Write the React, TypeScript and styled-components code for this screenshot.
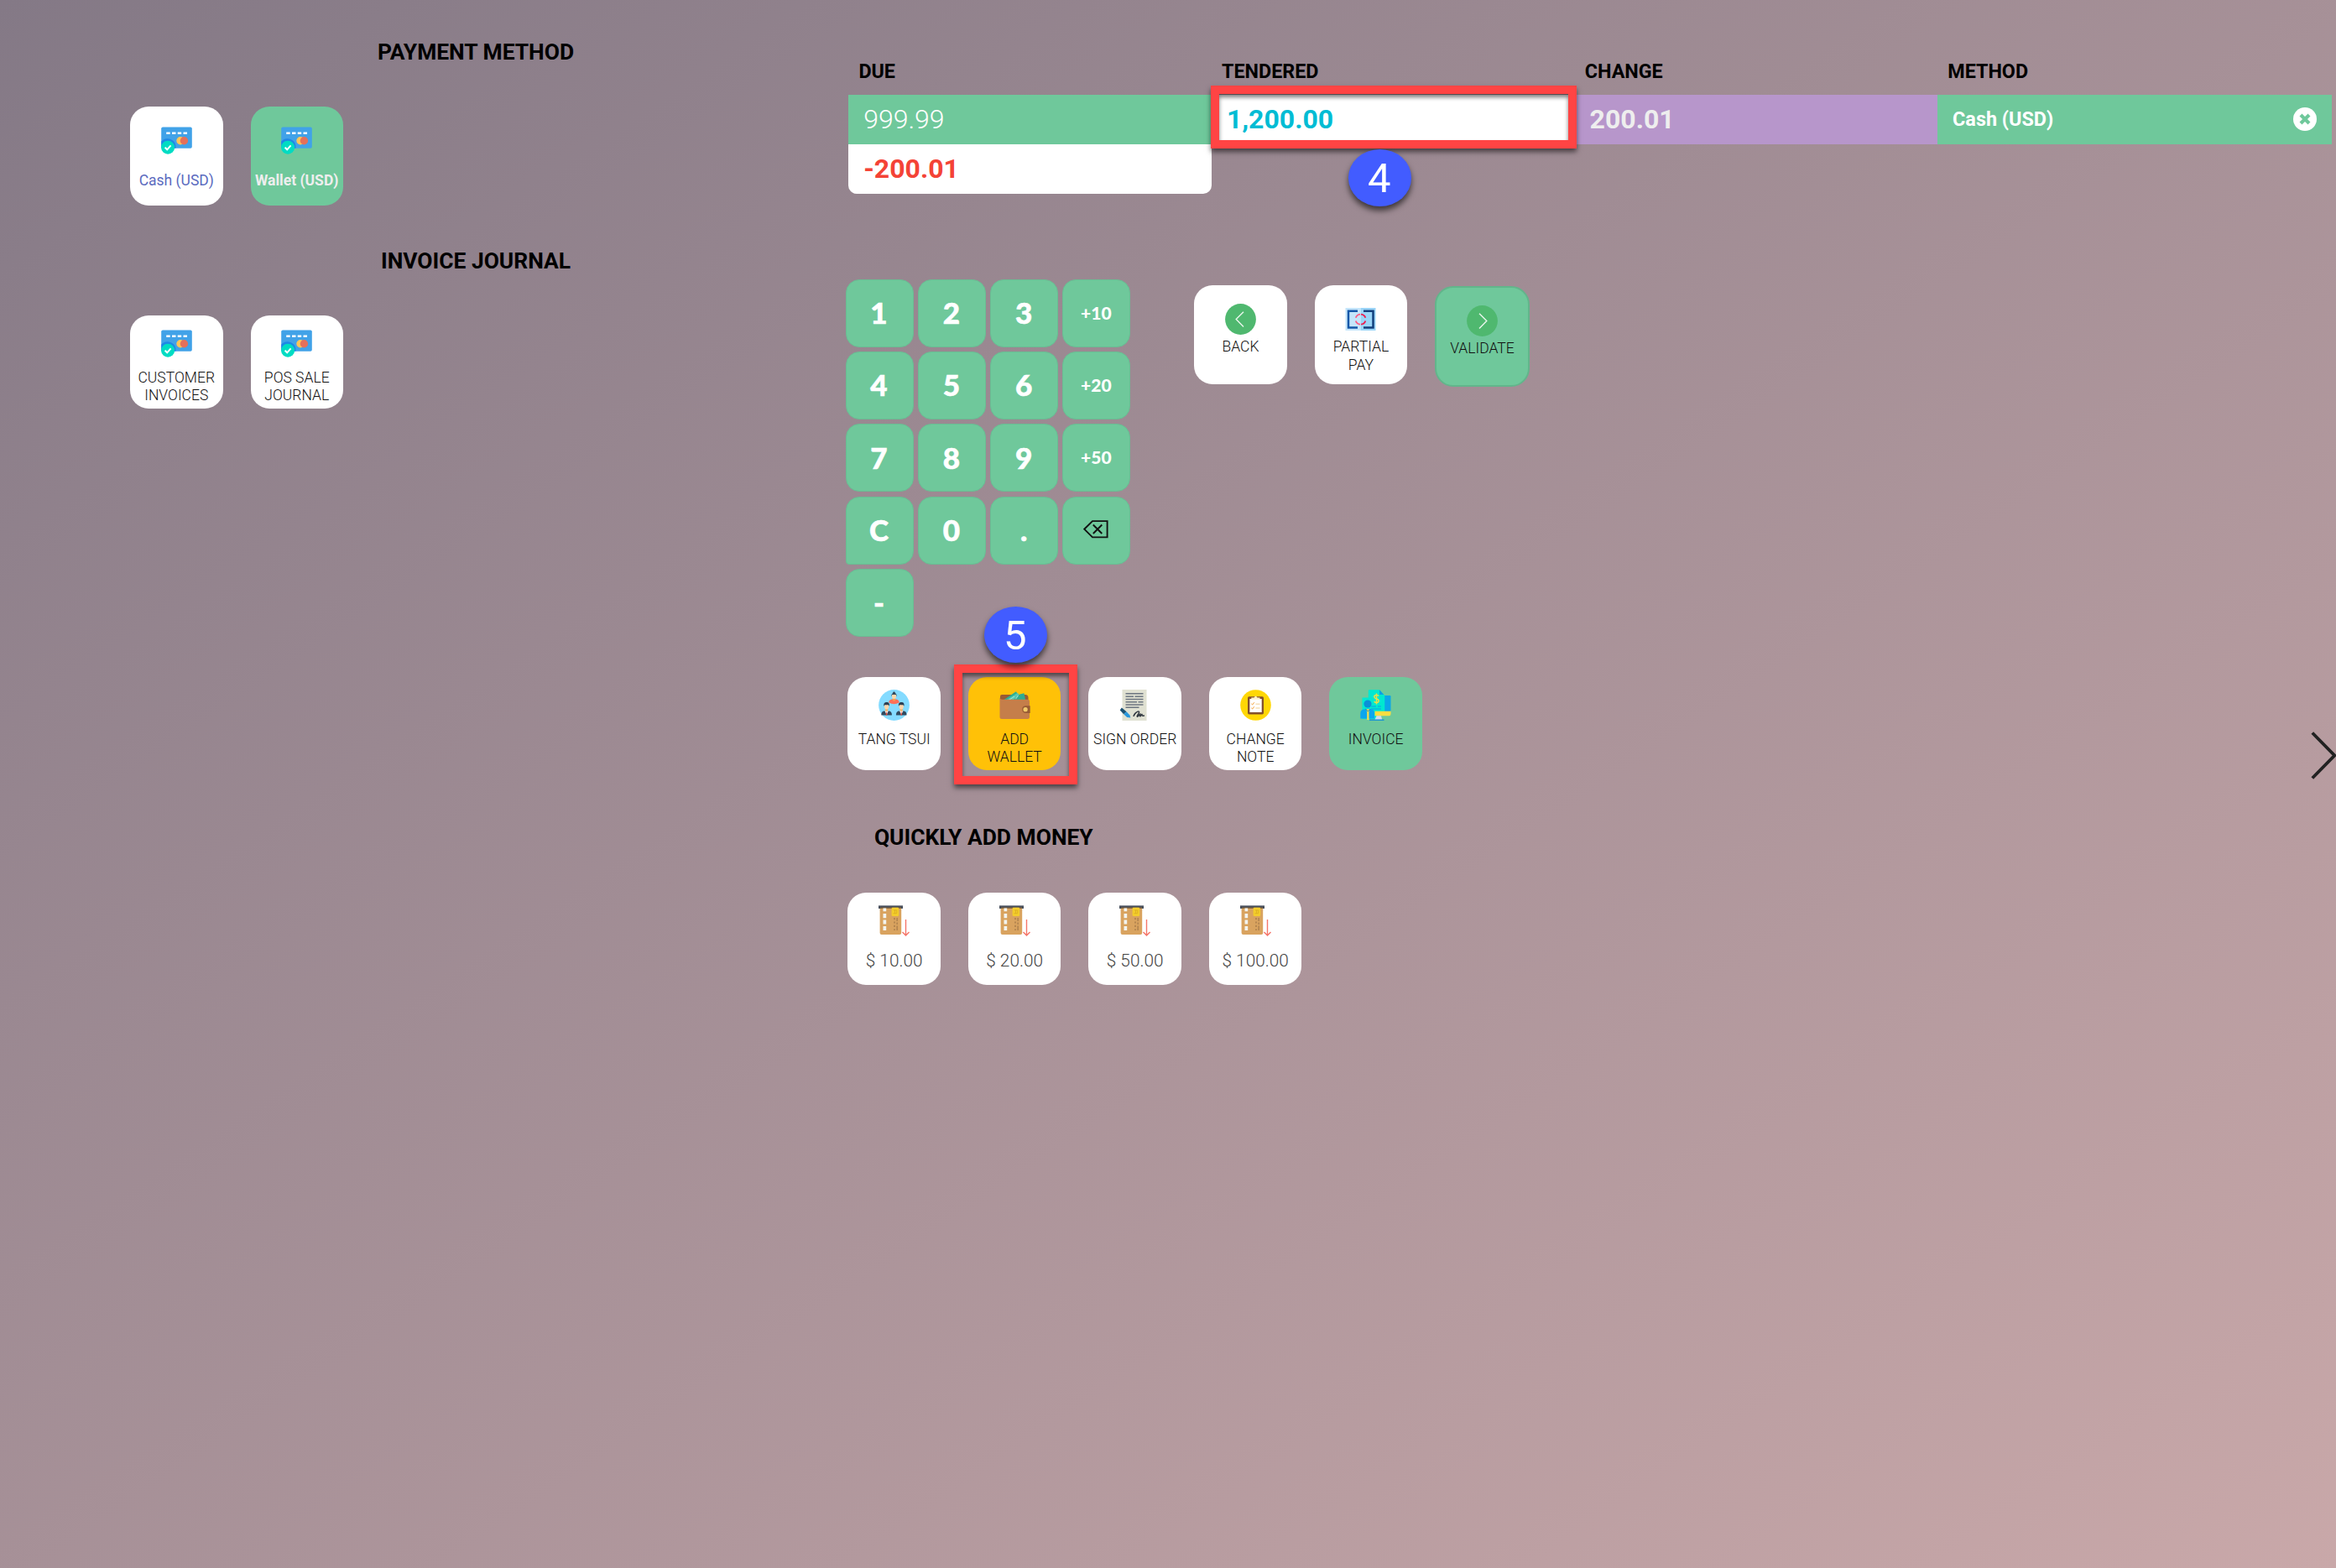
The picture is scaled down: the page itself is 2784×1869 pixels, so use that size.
import React from 'react';
import styled, { createGlobalStyle } from 'styled-components';

const GREEN = '#6fc89b';

const GlobalStyle = createGlobalStyle`
  html, body { margin: 0; padding: 0; }
  body { overflow: hidden; }
  * { box-sizing: border-box; }
`;

const Page = styled.main`
  position: relative;
  display: grid;
  grid-template-columns: 1007.5px 1fr;
  width: 2784px;
  height: 1869px;
  overflow: hidden;
  background: linear-gradient(to right bottom, #847986, #c9a8a9);
  font-family: Roboto, 'Liberation Sans', sans-serif;
  color: #000;
`;

const Sidebar = styled.aside`
  display: flex;
  flex-direction: column;
  padding: 47px 28.5px 0 155px;
`;

const Heading = styled.h2<{ $center?: boolean }>`
  margin: 0;
  font-size: 26.4px;
  line-height: 30px;
  font-weight: 700;
  text-align: ${(p) => (p.$center ? 'center' : 'left')};
`;

const Section = styled.section<{ $top?: number }>`
  display: flex;
  flex-direction: column;
  gap: 50.3px;
  margin-top: ${(p) => p.$top ?? 0}px;
`;

const TileRow = styled.div`
  display: flex;
  align-items: flex-start;
  gap: 33px;
`;

type Kind = 'compact' | 'tall' | 'action' | 'money';

const shape: Record<Kind, { h: number; pad: number; gap: number }> = {
  compact: { h: 110.5, pad: 15, gap: 11.7 },
  tall: { h: 117.5, pad: 22, gap: 18.6 },
  action: { h: 117.5, pad: 22, gap: 4 },
  money: { h: 110.5, pad: 15, gap: 19.4 },
};

const TileBox = styled.button<{ $kind: Kind; $bg?: string; $outlined?: boolean }>`
  display: flex;
  flex-direction: column;
  align-items: center;
  flex: none;
  width: ${(p) => (p.$outlined ? 112.5 : 110.5)}px;
  height: ${(p) => shape[p.$kind].h + (p.$outlined ? 2 : 0)}px;
  margin: ${(p) => (p.$outlined ? '1px 0 0 0' : '0')};
  padding: ${(p) => shape[p.$kind].pad - (p.$outlined ? 1 : 0)}px 0 0;
  gap: ${(p) => shape[p.$kind].gap}px;
  border: ${(p) => (p.$outlined ? '2px solid #62b58b' : '0')};
  border-radius: 22px;
  background: ${(p) => p.$bg ?? '#fff'};
  font-family: inherit;
`;

const Label = styled.span<{ $color?: string; $weight?: number; $size?: number }>`
  font-size: ${(p) => p.$size ?? 17.5}px;
  line-height: 21.5px;
  font-weight: ${(p) => p.$weight ?? 300};
  color: ${(p) => p.$color ?? '#111'};
  text-align: center;
  white-space: pre;
`;

const Main = styled.section`
  display: flex;
  flex-direction: column;
  padding-top: 68px;
`;

const Table = styled.div`
  display: grid;
  grid-template-columns: 432.7px 432.7px 432.5px 470.1px;
  grid-template-rows: 45px 58.5px 59.5px;
  margin-left: 3.7px;
  height: 163px;
`;

const Head = styled.div`
  padding: 1.5px 0 0 12.2px;
  font-size: 23.3px;
  line-height: 30px;
  font-weight: 700;
`;

const Cell = styled.div<{ $bg: string; $color: string; $weight?: number; $size?: number; $last?: boolean }>`
  display: flex;
  align-items: center;
  justify-content: space-between;
  padding: 0 18px;
  background: ${(p) => p.$bg};
  color: ${(p) => p.$color};
  font-size: ${(p) => p.$size ?? 32}px;
  font-weight: ${(p) => p.$weight ?? 700};
  border-radius: ${(p) => (p.$last ? '0 0 10px 10px' : '0')};
`;

const Controls = styled.div`
  display: flex;
  gap: 75.7px;
  margin-top: 101.7px;
`;

const Keypad = styled.div`
  display: grid;
  grid-template-columns: repeat(4, 81px);
  grid-auto-rows: 81px;
  gap: 5.3px;
  width: 340px;
`;

const Key = styled.button<{ $small?: boolean; $square?: boolean }>`
  display: flex;
  align-items: center;
  justify-content: center;
  padding: 0 1px 2px 0;
  border: 1px solid #69bd93;
  border-radius: ${(p) => (p.$square ? '16px 16px 16px 4px' : '16px')};
  background: ${GREEN};
  color: #fff;
  font-family: 'Lato Black', Lato, sans-serif;
  font-weight: 900;
  font-size: ${(p) => (p.$small ? 21 : 35)}px;
  -webkit-text-stroke: ${(p) => (p.$small ? 0 : 0.6)}px #fff;
`;

const Actions = styled.div`
  padding-top: 7.5px;
`;

const Extras = styled.div`
  padding: 48.3px 0 0 2.9px;
`;

const Quick = styled.div`
  display: flex;
  flex-direction: column;
  gap: 50.8px;
  padding: 65.5px 0 0 2.9px;
`;

const QuickTitle = styled.div`
  padding-left: 31.5px;
`;

const Highlight = styled.div<{ $x: number; $y: number; $w: number; $h: number }>`
  position: absolute;
  left: ${(p) => p.$x}px;
  top: ${(p) => p.$y}px;
  width: ${(p) => p.$w}px;
  height: ${(p) => p.$h}px;
  border: 10px solid #ff4444;
  box-shadow: 0 4px 6px rgba(0, 0, 0, 0.55), inset 0 4px 5px rgba(0, 0, 0, 0.5);
`;

const Badge = styled.div<{ $x: number; $y: number }>`
  position: absolute;
  left: ${(p) => p.$x}px;
  top: ${(p) => p.$y}px;
  display: flex;
  align-items: center;
  justify-content: center;
  width: 75.5px;
  height: 67.5px;
  padding: 1.5px 1px 0 0;
  border-radius: 50%;
  background: #425cff;
  box-shadow: 0 5px 7px rgba(0, 0, 0, 0.6);
  color: #fff;
  font-size: 49px;
  line-height: 1;
`;

const NextArrow = styled.svg`
  position: absolute;
  right: 0;
  top: 870px;
`;

const IconSvg = styled.svg`
  flex: none;
`;

const Icon = ({ children }: { children: React.ReactNode }) => (
  <IconSvg width="37" height="37" viewBox="0 0 37 37" fill="none">
    {children}
  </IconSvg>
);

const CardIcon = () => (
  <Icon>
    <rect x="0.2" y="2.5" width="36.6" height="25.2" rx="1.8" fill="#41a2e8" />
    <path d="M0.2 19.6A10 10 0 0 1 17.5 27.7H0.2Z" fill="#1e88e5" />
    {[6.2, 13, 19.7, 26.5].map((x) => (
      <rect key={x} x={x} y="8.5" width="4.5" height="2.4" fill="#fff" />
    ))}
    <circle cx="23" cy="18.7" r="4.7" fill="#fbc559" />
    <circle cx="27.4" cy="18.7" r="4.7" fill="#e4705a" />
    <circle cx="8.1" cy="26.7" r="8" fill="#00dcc3" />
    <path d="M4.6 26.8L7.2 29.3L11.6 24.3" stroke="#fff" strokeWidth="2" />
  </Icon>
);

const ArrowCircle = ({ left }: { left?: boolean }) => (
  <Icon>
    <circle cx="18.5" cy="18.5" r="18.4" fill="#4fb86f" />
    <path d={left ? 'M22 9.7L13.2 18.6L22 27.5' : 'M15 9.7L23.8 18.6L15 27.5'} stroke="#e9f6ec" strokeWidth="1.4" />
  </Icon>
);

const PartialIcon = () => (
  <Icon>
    <path d="M0.5 5H18.5V32H0.5Z" fill="#c5e6fb" />
    <path d="M18.5 5H36.5V32H18.5Z" fill="#9ad5f8" />
    <path d="M15 8.8H4V28.5H15" stroke="#1457a8" strokeWidth="2.5" />
    <path d="M22 8.8H33.5V28.5H22" stroke="#123f7c" strokeWidth="2.5" />
    <path d="M12.8 16.8A6 6 0 0 1 18 12.6M12.8 20.5A6 6 0 0 0 18 24.6" stroke="#ff5c82" strokeWidth="1.9" />
    <path d="M19 12.6A6 6 0 0 1 24.3 16.8M24.3 20.5A6 6 0 0 1 19 24.6" stroke="#ee1c4e" strokeWidth="1.9" />
  </Icon>
);

const Person = ({ x, y, suit }: { x: number; y: number; suit: string }) => (
  <g transform={`translate(${x} ${y})`}>
    <path d="M-6.3 15.6C-6.3 11.5-4.5 10.6 0 10.2C4.5 10.6 6.3 11.5 6.3 15.6Z" fill={suit} />
    <path d="M-2.2 10.2L0 15.5L2.2 10.2Z" fill="#fff" />
    <path d="M0 10.7L1 15.6H-1Z" fill="#e64c3c" />
    <rect x="-1.5" y="7" width="3" height="4" fill="#f3b36b" />
    <ellipse cx="0" cy="5.2" rx="2.6" ry="3.5" fill="#fdd7ad" />
    <path d="M-3.2 5C-3.8 1.2-2 .2 0 .2C2.5 .2 3.8 1.5 3.2 5L2.2 3.4H-2.2Z" fill="#2c3e50" />
  </g>
);

const TeamIcon = () => (
  <Icon>
    <circle cx="18.5" cy="18.5" r="18.4" fill="#84dbff" />
    <path d="M12.3 15.6C12.3 11.8 15 11.8 18.5 11.3C22 11.8 24.7 11.8 24.7 15.6Q18.5 19 12.3 15.6Z" fill="#ff7058" />
    <rect x="17.1" y="8.8" width="2.8" height="4.5" fill="#f2a64f" />
    <ellipse cx="18.5" cy="7.5" rx="2.6" ry="3.5" fill="#fdd7ad" />
    <path d="M15.4 8.5C15.2 4.7 16.7 4.8 17 4.2C16.8 2 20.2 2 20 4.2C21.6 5 21.8 6.5 21.6 8.5L20.7 6H16.3Z" fill="#324a5e" />
    <Person x={9.6} y={14.8} suit="#324a5e" />
    <Person x={27.2} y={14.8} suit="#324a5e" />
  </Icon>
);

const WalletIcon = () => (
  <Icon>
    <path d="M1 8Q1 6 3 6H31Q34 6 34.5 9V14H1Z" fill="#985b35" />
    <path d="M5.5 12L20 2.3L25.5 12Z" fill="#2cae94" />
    <path d="M9 12L22 3.8L26.5 12Z" fill="#58c8b1" />
    <path d="M17 12L24.5 5.5L29.5 4.3L31 12Z" fill="#2fab91" />
    <path d="M12 12L18 8.2M19.5 11.2L22.5 7" stroke="#a1e4d7" strokeWidth="1" />
    <path d="M0.5 9.5Q1 11.7 3.5 11.7H33.5Q36 11.7 36 14V32.5Q36 35 33.5 35H3Q.5 35 .5 32.5Z" fill="#c57e4a" />
    <path d="M31 19.2H36.7V28H31Q27.2 27.6 27.2 23.6T31 19.2Z" fill="#985b35" />
    <circle cx="31.1" cy="23.7" r="2.6" fill="#f2ca6a" />
  </Icon>
);

const SignIcon = () => (
  <Icon>
    <path d="M3.5 0H32.5V37H3.5Z" fill="#e0e1d2" />
    <path
      d="M7.5 4.8H28.5M7.5 8.2H17M18.5 8.2H28.5M7.5 11.5H28.5M7.5 14.8H21M22.5 14.8H28.5M7.5 18H28.5M7.5 21.2H23.5"
      stroke="#6d7681"
      strokeWidth="1.4"
    />
    <path d="M2.8 21.5L8.5 26.2L5.2 29.3L.7 24.6Z" fill="#1c5274" />
    <path d="M5.2 29.3L8.5 26.2L12.5 30.5L13.3 33.6L9.2 33Z" fill="#2696dc" />
    <path d="M17 31.8C17 29 22 25.2 23.5 26.3C24.5 27.5 20 32 21.4 32.3C23 32 24.5 28.6 25 28.9C25 29.5 24 31.8 25 31.7C26 31 26.5 29.2 27 29.5C27 30 27 31.5 28 31.2L30 31" stroke="#343b43" strokeWidth="1.5" />
    <path d="M17 31.8L19 28" stroke="#343b43" strokeWidth="1.2" />
  </Icon>
);

const NoteIcon = () => (
  <Icon>
    <circle cx="18.5" cy="18.5" r="18.3" fill="#ffd705" />
    <rect x="9" y="8.2" width="19" height="21.2" rx="1.6" fill="#83502c" />
    <path d="M11.4 11H25.7V27H11.4Z" fill="#fff" />
    <path d="M13.3 11.8V9.5H16.5Q18.5 6 20.5 9.5H23.5V11.8Z" fill="#fff0c7" />
    <path d="M13.3 16.8L14.6 18L16.8 15.3M13.3 21.8L14.6 23L16.8 20.3" stroke="#f39c2d" strokeWidth="1" />
    <path d="M18.5 17.2H23.5M18.5 22H23.5" stroke="#f5dfb5" strokeWidth="1.4" />
  </Icon>
);

const InvoiceIcon = () => (
  <Icon>
    <rect x="22" y="7" width="14.5" height="19" rx="1.2" fill="#0ba6e8" />
    <path d="M2.5 9.5H9.8V1.2Q9.8 .2 11 .2H23L29.3 7V26H20V35H2.5Z" fill="#00e8d0" />
    <path d="M23 .2L28.2 6H23Z" fill="#0aa0e5" />
    <path d="M22.2 7.6C21 5.7 16.3 6 16.8 9C17.3 11.7 22.2 10.3 22.2 13.3C22.2 16.1 17.7 16.2 16.7 14.2M19.5 4.5V17.5" stroke="#eddc48" strokeWidth="1.5" />
    <path d="M13 20H19M21 20H25M13 23H25" stroke="#0aa0e5" strokeWidth="1.1" />
    <path d="M17.5 25.8H36.5V29Q36.5 31.2 34.5 31.2H17.5Z" fill="#fddd42" />
    <path d="M19.5 31.2H25L26.2 36H17.5Z" fill="#d2dbef" />
    <path d="M11 36.2H28.5" stroke="#148fd8" strokeWidth="1.4" />
    <circle cx="9" cy="17" r="4.6" fill="#0a8fd8" />
    <path d="M.3 34.4V28.3Q.3 24 4.5 23.5L9.5 22.7L14.5 23.5Q17 24.5 17 28.5V34.4Z" fill="#0ba6ee" />
    <path d="M7.2 23.2H11.5L10.5 27V36H8.2V27Z" fill="#f4df4b" />
    <path d="M6.5 23.2L9.4 26L12 23.2" stroke="#0a82cb" strokeWidth="1" />
  </Icon>
);

const MoneyIcon = () => (
  <Icon>
    <path d="M1.6 2.5H27.2V33Q27.2 35 25.2 35H3.6Q1.6 35 1.6 33Z" fill="#d9a35f" />
    <path d="M0 .4H29V4H0Z" fill="#484f5c" />
    <path d="M2.3 2.6H27V4H2.3Z" fill="#87683e" />
    <path d="M5.5 3.5H9.2V7.2H5.5ZM5.5 10H9.2V15.2H5.5ZM5.5 17.5H9.2V22.5H5.5ZM5.5 25H9.2V30H5.5Z" fill="#f3f4ef" />
    <rect x="15.6" y="2.7" width="8.6" height="10.3" rx="1.3" fill="#f3cd2b" />
    <path d="M18 6H21.7V9.7H17.5M19.5 6V9.7" stroke="#d8a91e" strokeWidth=".7" />
    <path d="M19 15V30" stroke="#a77b49" strokeWidth="1.4" strokeDasharray="2.2 2.2" />
    <path d="M22.1 15V19M22.1 20.5V23M22.1 24.5V30" stroke="#9b7145" strokeWidth="1" />
    <path d="M32.5 17V36M28.5 31.9L32.5 36L36.5 31.9" stroke="#f5776b" strokeWidth="1.4" />
  </Icon>
);

const BackspaceIcon = () => (
  <svg width="30" height="22" viewBox="0 0 30 22" fill="none" stroke="#111" strokeWidth="1.9">
    <path d="M11 1.1H28.6V20.4H11L1.2 10.7Z" />
    <path d="M11.8 5.5L22.3 16M22.3 5.5L11.8 16" />
  </svg>
);

const RemoveIcon = () => (
  <svg width="28" height="28" viewBox="0 0 28 28">
    <circle cx="14" cy="14" r="14" fill="#fff" />
    <path d="M9 9L19 19M19 9L9 19" stroke={GREEN} strokeWidth="4.2" />
  </svg>
);

interface TileProps {
  icon: React.ReactNode;
  text: string;
  kind?: Kind;
  bg?: string;
  color?: string;
  weight?: number;
  size?: number;
  outlined?: boolean;
}

const Tile = ({ icon, text, kind = 'compact', bg, color, weight, size, outlined }: TileProps) => (
  <TileBox $kind={kind} $bg={bg} $outlined={outlined}>
    {icon}
    <Label $color={color} $weight={weight} $size={size}>{text}</Label>
  </TileBox>
);

const keys = ['1', '2', '3', '+10', '4', '5', '6', '+20', '7', '8', '9', '+50', 'C', '0', '.', 'back', '-'];

export default function App() {
  return (
    <Page>
      <GlobalStyle />
      <Sidebar>
        <Section>
          <Heading $center>PAYMENT METHOD</Heading>
          <TileRow>
            <Tile kind="tall" icon={<CardIcon />} text="Cash (USD)" color="#5c6bc0" weight={400} />
            <Tile kind="tall" icon={<CardIcon />} text="Wallet (USD)" bg={GREEN} color="#eee" weight={700} />
          </TileRow>
        </Section>
        <Section $top={51.2}>
          <Heading $center>INVOICE JOURNAL</Heading>
          <TileRow>
            <Tile icon={<CardIcon />} text={'CUSTOMER\nINVOICES'} />
            <Tile icon={<CardIcon />} text={'POS SALE\nJOURNAL'} />
          </TileRow>
        </Section>
      </Sidebar>

      <Main>
        <Table>
          <Head>DUE</Head>
          <Head>TENDERED</Head>
          <Head>CHANGE</Head>
          <Head>METHOD</Head>
          <Cell $bg={GREEN} $color="#fff" $weight={300}>999.99</Cell>
          <Cell $bg="#fff" $color="#00bcd4">1,200.00</Cell>
          <Cell $bg="#b796cb" $color="#eee">200.01</Cell>
          <Cell $bg={GREEN} $color="#fff" $size={23.4}>
            Cash (USD)
            <RemoveIcon />
          </Cell>
          <Cell $bg="#fff" $color="#f44336" $last>-200.01</Cell>
        </Table>

        <Controls>
          <Keypad>
            {keys.map((k) => (
              <Key key={k} $small={k.startsWith('+')} $square={k === 'C'}>
                {k === 'back' ? <BackspaceIcon /> : k}
              </Key>
            ))}
          </Keypad>
          <Actions>
            <TileRow>
              <Tile kind="action" icon={<ArrowCircle left />} text="BACK" />
              <Tile kind="action" icon={<PartialIcon />} text={'PARTIAL\nPAY'} />
              <Tile kind="action" icon={<ArrowCircle />} text="VALIDATE" bg={GREEN} outlined />
            </TileRow>
          </Actions>
        </Controls>

        <Extras>
          <TileRow>
            <Tile icon={<TeamIcon />} text="TANG TSUI" />
            <Tile icon={<WalletIcon />} text={'ADD\nWALLET'} bg="#ffc107" />
            <Tile icon={<SignIcon />} text="SIGN ORDER" />
            <Tile icon={<NoteIcon />} text={'CHANGE\nNOTE'} />
            <Tile icon={<InvoiceIcon />} text="INVOICE" bg={GREEN} />
          </TileRow>
        </Extras>

        <Quick>
          <QuickTitle>
            <Heading>QUICKLY ADD MONEY</Heading>
          </QuickTitle>
          <TileRow>
            {['$ 10.00', '$ 20.00', '$ 50.00', '$ 100.00'].map((t) => (
              <Tile key={t} kind="money" icon={<MoneyIcon />} text={t} size={20.8} color="#444" />
            ))}
          </TileRow>
        </Quick>
      </Main>

      <Highlight $x={1443} $y={102} $w={436} $h={74.5} />
      <Badge $x={1606.5} $y={178}>4</Badge>
      <Highlight $x={1136.5} $y={791.5} $w={147.5} $h={143.5} />
      <Badge $x={1172.5} $y={722.7}>5</Badge>

      <NextArrow width="32" height="62" viewBox="0 0 32 62" fill="none">
        <path d="M3.8 3.5L30.2 30.5L3.8 57.5" stroke="#222" strokeWidth="3.8" />
      </NextArrow>
    </Page>
  );
}
